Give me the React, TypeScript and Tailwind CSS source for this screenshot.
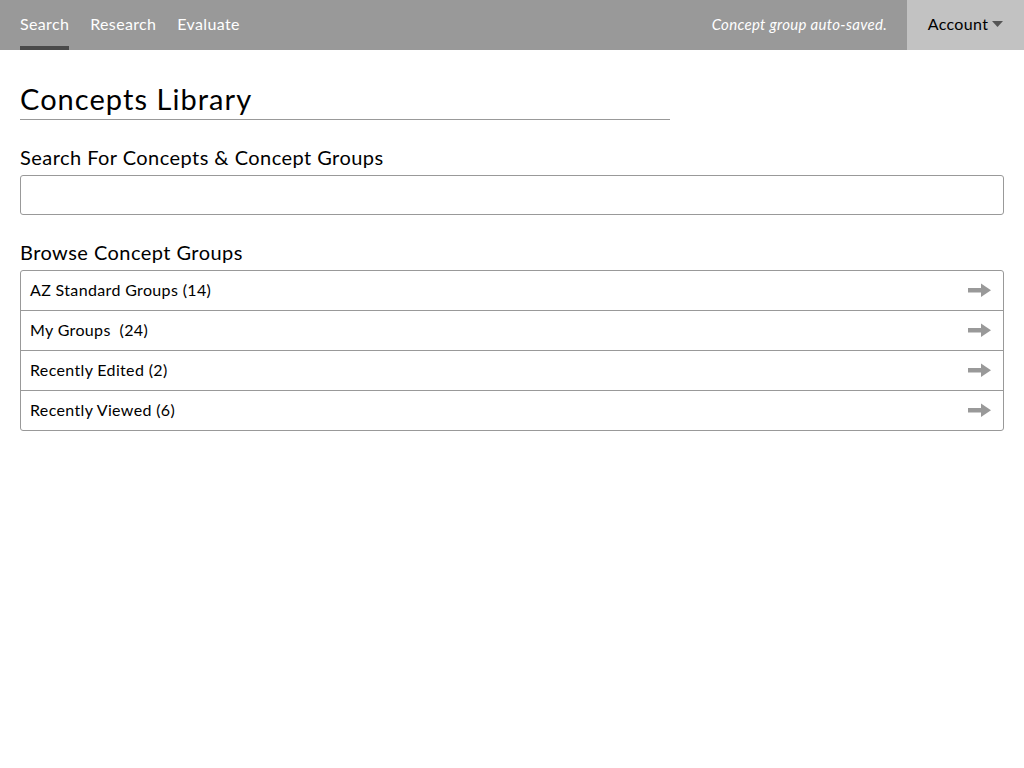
import { ReactNode } from "react";

const groups = [
  "AZ Standard Groups (14)",
  "My Groups\u00a0 (24)",
  "Recently Edited (2)",
  "Recently Viewed (6)",
];

function Arrow() {
  return (
    <svg width="23" height="16" viewBox="0 0 23 16" className="shrink-0">
      <rect x="0" y="6" width="14" height="4.5" fill="#999" />
      <polygon points="13,1.5 23,8.25 13,15" fill="#999" />
    </svg>
  );
}

function NavLink({ active, children }: { active?: boolean; children: ReactNode }) {
  return (
    <a
      href="#"
      className={
        active
          ? "h-full flex items-center border-b-4 border-[#4a4a4a] pt-[2px] text-white"
          : "h-full flex items-center border-b-4 border-transparent pt-[2px] text-white"
      }
    >
      {children}
    </a>
  );
}

export default function App() {
  return (
    <div className="min-h-screen bg-white text-black font-['Lato','Noto_Sans',sans-serif]">
      <header className="h-[50px] bg-[#999999] flex items-stretch">
        <nav className="flex items-stretch gap-[21px] pl-5 text-[16px] tracking-[0.35px]">
          <NavLink active>Search</NavLink>
          <NavLink>Research</NavLink>
          <NavLink>Evaluate</NavLink>
        </nav>
        <div className="ml-auto flex items-center pr-5 pb-[2px] text-[15px] tracking-[0.3px] italic text-white">
          Concept group auto-saved.
        </div>
        <button className="w-[117px] bg-[#c2c2c2] flex items-center justify-center gap-1 pb-[2px] text-[16px] tracking-[0.35px] text-black">
          Account
          <svg width="11" height="6" viewBox="0 0 11 6">
            <polygon points="0,0 11,0 5.5,6" fill="#555" />
          </svg>
        </button>
      </header>

      <main className="px-5">
        <h1 className="w-[650px] mt-[32px] border-b border-[#999] pb-[3px] text-[29px] leading-[34px] tracking-[1.05px]">
          Concepts Library
        </h1>

        <h2 className="mt-[25px] text-[20px] leading-[24px] tracking-[0.45px]">
          Search For Concepts &amp; Concept Groups
        </h2>
        <input
          type="text"
          className="mt-[6px] w-full h-[40px] border border-[#999] rounded-[3px] px-3 outline-none"
        />

        <h2 className="mt-[25px] text-[20px] leading-[24px] tracking-[0.45px]">
          Browse Concept Groups
        </h2>
        <ul className="mt-[6px] border border-[#999] rounded-[3px]">
          {groups.map((g, i) => (
            <li
              key={g}
              className={
                i === 0
                  ? "h-[39px] flex items-center justify-between pl-[9px] pr-[12px] pb-[1px] text-[16px] tracking-[0.35px]"
                  : "h-[40px] flex items-center justify-between pl-[9px] pr-[12px] pb-[1px] text-[16px] tracking-[0.35px] border-t border-[#999]"
              }
            >
              <span>{g}</span>
              <Arrow />
            </li>
          ))}
        </ul>
      </main>
    </div>
  );
}
